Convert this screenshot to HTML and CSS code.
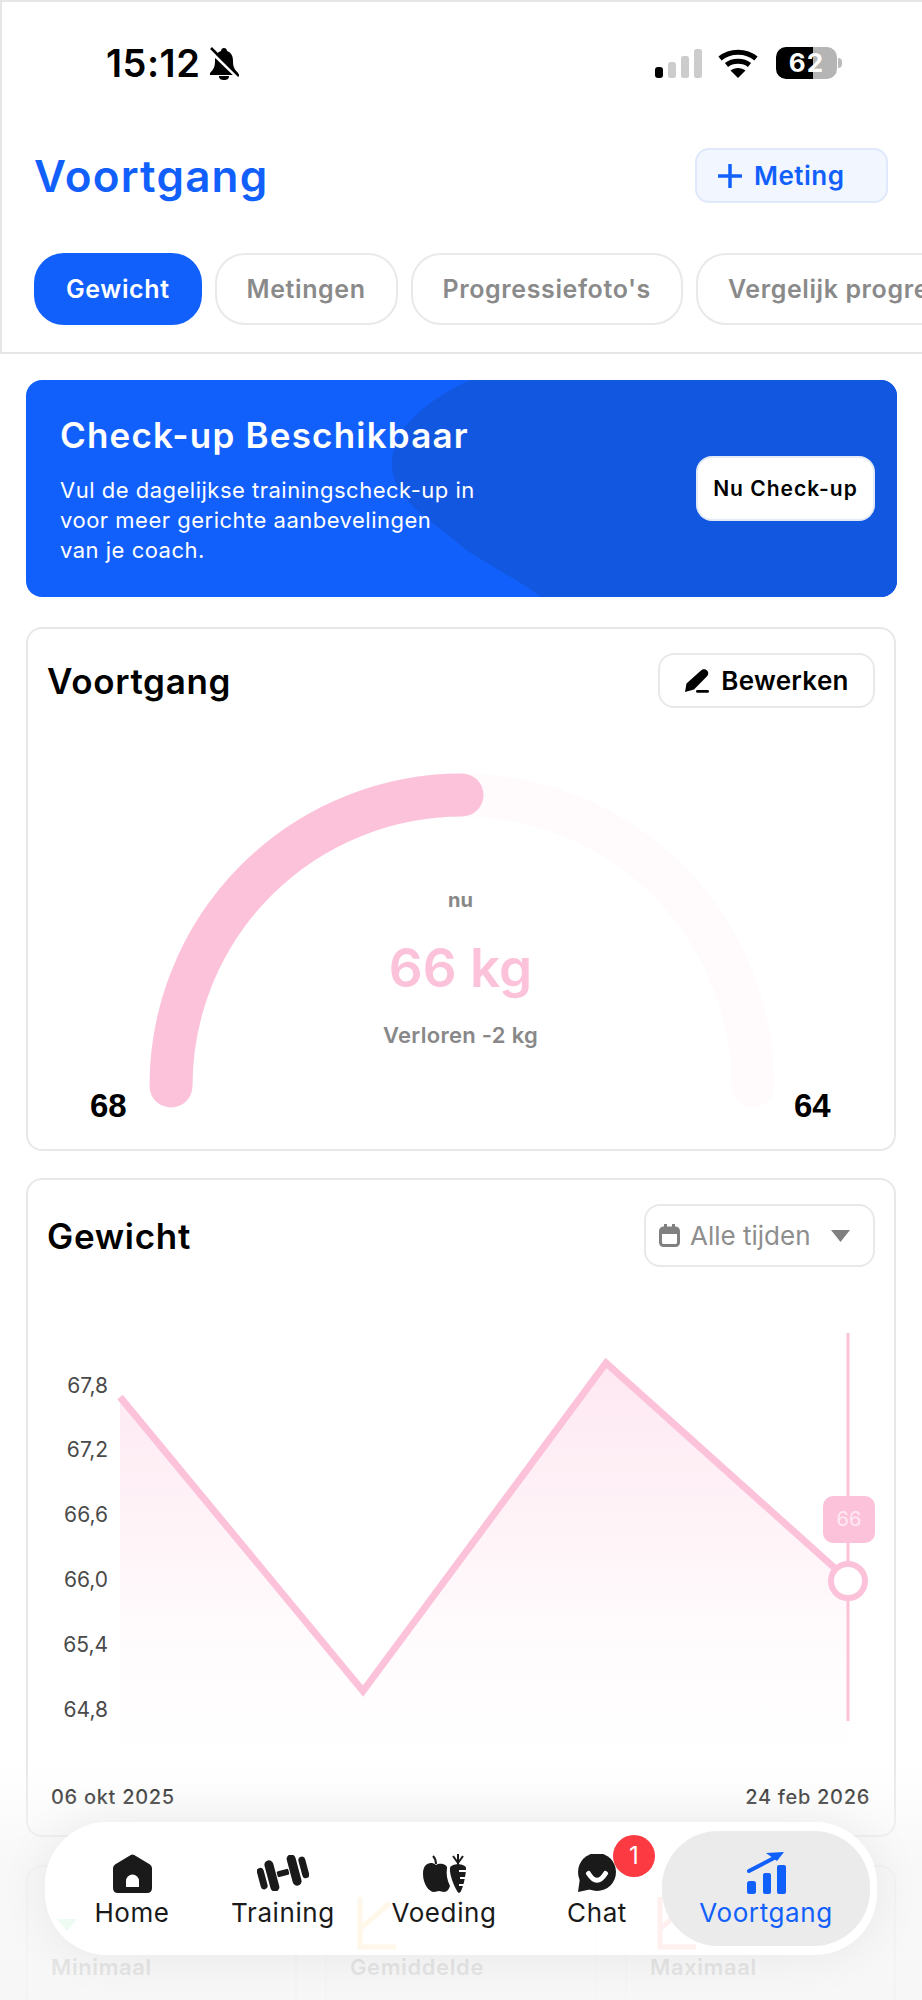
FILE: index.html
```html
<!DOCTYPE html>
<html lang="nl">

<head>
    <meta charset="UTF-8">
    <meta name="viewport" content="width=device-width, initial-scale=1.0">
    <title>Voortgang</title>
    <link rel="stylesheet" href="styles.css">
</head>

<body>
    <div class="page">
        <header class="header">
            <div class="status-bar">
                <span class="status-time">15:12</span>
                <svg class="status-bell" viewBox="0 0 30 33" width="30" height="33">
                    <path d="M15 1c-2 0-3 1.500-3 3C7 6 6 10 6 14c0 5-1 8-5 12v2h28v-2c-4-4-5-7-5-12 0-4-1-8-6-10 0-1.500-1-3-3-3z"></path>
                    <path d="M10 29h10c0 3-2 4-5 4s-5-1-5-4z"></path>
                    <path class="bell-gap" d="M1 4l28 27"></path>
                    <path class="bell-line" d="M2 1l28 28"></path>
                </svg>
                <div class="status-right">
                    <svg class="status-signal" viewBox="0 0 47 29" width="47" height="29">
                        <rect x="0" y="18" width="8" height="11" rx="3"></rect>
                        <rect class="signal-off" x="13" y="13" width="8" height="16" rx="2.500"></rect>
                        <rect class="signal-off" x="26" y="7" width="8" height="22" rx="2.500"></rect>
                        <rect class="signal-off" x="39" y="0" width="8" height="29" rx="2.500"></rect>
                    </svg>
                    <svg class="status-wifi" viewBox="0 0 40 29" width="40" height="29">
                        <path d="M2 9.500C12 1 28 1 38 9.500M8.500 16C14.500 11 25.500 11 31.500 16" fill="none" stroke="#000" stroke-width="5"></path>
                        <path d="M20 29l-7.500-7.500c4-3.500 11-3.500 15 0z"></path>
                    </svg>
                    <div class="battery">62</div>
                    <span class="battery-tip"></span>
                </div>
            </div>

            <div class="title-row">
                <h1 class="page-title">Voortgang</h1>
                <button class="add-button">
                    <svg viewBox="0 0 24 24" width="24" height="24">
                        <path d="M12 1v22M1 12h22" fill="none" stroke="#1260fb" stroke-width="3.500" stroke-linecap="round"></path>
                    </svg>
                    Meting
                </button>
            </div>

            <div class="tabs">
                <div class="tab active">Gewicht</div>
                <div class="tab">Metingen</div>
                <div class="tab">Progressiefoto's</div>
                <div class="tab">Vergelijk progressie</div>
            </div>
        </header>

        <main class="content">
            <section class="banner">
                <svg class="banner-blob" viewBox="0 0 871 217" width="871" height="217">
                    <path d="M444 0C400 20 366 50 366 83c0 37 34 52 74 87 40 25 60 35 75 47h356V0z"></path>
                </svg>
                <div class="banner-text">
                    <h2 class="banner-title">Check-up Beschikbaar</h2>
                    <p class="banner-copy">Vul de dagelijkse trainingscheck-up in<br>voor meer gerichte aanbevelingen<br>van je coach.</p>
                </div>
                <button class="banner-button">Nu Check-up</button>
            </section>

            <section class="card card-progress">
                <div class="card-head">
                    <h2 class="card-title">Voortgang</h2>
                    <button class="edit-button">
                        <svg viewBox="0 0 25 24" width="25" height="24">
                            <path d="M17 1.500c2-2 4.500-1.500 6 0s1.800 3.500.3 5.500L10 20.500 1 23l1.500-8.500z"></path>
                            <rect x="12" y="21" width="13" height="2.800" rx="1.400"></rect>
                        </svg>
                        Bewerken
                    </button>
                </div>
                <div class="gauge">
                    <svg viewBox="0 0 827 405" width="827" height="405">
                        <path class="gauge-track" d="M124 365A291 291 0 0 1 706 365"></path>
                        <path class="gauge-value" d="M124 365A291 291 0 0 1 415 74"></path>
                    </svg>
                    <div class="gauge-center">
                        <div class="gauge-now">nu</div>
                        <div class="gauge-weight">66 kg</div>
                        <div class="gauge-lost">Verloren -2 kg</div>
                    </div>
                    <span class="gauge-end gauge-start-label">68</span>
                    <span class="gauge-end gauge-goal-label">64</span>
                </div>
            </section>

            <section class="card card-chart">
                <div class="card-head">
                    <h2 class="card-title">Gewicht</h2>
                    <div class="range-select">
                        <svg viewBox="0 0 21 23" width="21" height="23">
                            <rect x="1.500" y="4" width="18" height="17.500" rx="3" fill="none" stroke="#808080" stroke-width="3"></rect>
                            <path d="M2 4h17v6H2zM5 0h3v5H5zM13 0h3v5h-3z" fill="#808080"></path>
                        </svg>
                        <span>Alle tijden</span>
                        <svg class="range-arrow" viewBox="0 0 19 12" width="19" height="12">
                            <path d="M0 0h19l-9.500 12z" fill="#808080"></path>
                        </svg>
                    </div>
                </div>
                <svg class="chart" viewBox="0 0 827 450" width="827" height="450">
                    <defs>
                        <linearGradient id="areaFill" x1="0" y1="0" x2="0" y2="1">
                            <stop offset="0" stop-color="#fcc2da" stop-opacity="0.38"></stop>
                            <stop offset="0.7" stop-color="#fcc2da" stop-opacity="0.06"></stop>
                            <stop offset="1" stop-color="#fcc2da" stop-opacity="0"></stop>
                        </linearGradient>
                    </defs>
                    <text class="axis-label" x="61" y="73">67,8</text>
                    <text class="axis-label" x="61" y="137">67,2</text>
                    <text class="axis-label" x="61" y="202">66,6</text>
                    <text class="axis-label" x="61" y="267">66,0</text>
                    <text class="axis-label" x="61" y="332">65,4</text>
                    <text class="axis-label" x="61" y="397">64,8</text>
                    <path d="M73 77L316 371 559 43 801 260V440H73z" fill="url(#areaFill)"></path>
                    <path class="chart-cursor" d="M801 13V401"></path>
                    <path class="chart-line" d="M73 77L316 371 559 43 801 260"></path>
                    <rect class="chart-tip" x="776" y="176" width="52" height="47" rx="10"></rect>
                    <text class="chart-tip-text" x="802" y="206">66</text>
                    <circle class="chart-dot" cx="801" cy="261" r="17"></circle>
                </svg>
                <div class="chart-dates">
                    <span>06 okt 2025</span>
                    <span>24 feb 2026</span>
                </div>
            </section>

            <section class="card card-stats">
                <div class="stat">
                    <svg class="stat-icon" viewBox="0 0 55 55" width="55" height="55">
                        <path d="M6 24l10 12 10-12z" fill="#4fd07f"></path>
                    </svg>
                    <div class="stat-label">Minimaal</div>
                    <div class="stat-value">65 kg</div>
                </div>
                <div class="stat">
                    <svg class="stat-icon" viewBox="0 0 55 55" width="55" height="55">
                        <path d="M10 2V52H46M10 34L40 8" fill="none" stroke="#ffb020" stroke-width="5"></path>
                    </svg>
                    <div class="stat-label">Gemiddelde</div>
                    <div class="stat-value">66,67 kg</div>
                </div>
                <div class="stat">
                    <svg class="stat-icon" viewBox="0 0 55 55" width="55" height="55">
                        <path d="M10 2V52H46M10 34L40 8" fill="none" stroke="#ff5a5a" stroke-width="5"></path>
                    </svg>
                    <div class="stat-label">Maximaal</div>
                    <div class="stat-value">68 kg</div>
                </div>
            </section>
        </main>

        <div class="bottom-fade"></div>

        <nav class="nav">
            <div class="nav-item">
                <span class="nav-icon">
                    <svg viewBox="0 0 39 39" width="39" height="39">
                        <path d="M17.800 1Q19.500-.2 21.200 1L37 10.500Q39 12 39 14.500V34Q39 39 34 39H5Q0 39 0 34V14.500Q0 12 2 10.500z"></path>
                        <path d="M13 33V27a6.500 6.500 0 0 1 13 0V33z" fill="#fff"></path>
                    </svg>
                </span>
                <span>Home</span>
            </div>
            <div class="nav-item">
                <span class="nav-icon">
                    <svg viewBox="-26 -18 52 36" width="52" height="36">
                        <g transform="rotate(-15)">
                            <rect x="-25" y="-11" width="7" height="22" rx="3.500"></rect>
                            <rect x="-16" y="-16" width="9" height="32" rx="4.500"></rect>
                            <rect x="-6" y="-3" width="12" height="6" rx="1.500"></rect>
                            <rect x="7" y="-16" width="9" height="32" rx="4.500"></rect>
                            <rect x="18" y="-11" width="7" height="22" rx="3.500"></rect>
                        </g>
                    </svg>
                </span>
                <span>Training</span>
            </div>
            <div class="nav-item">
                <span class="nav-icon">
                    <svg viewBox="0 0 43 39" width="43" height="39">
                        <path d="M13 11C8 7 0 9 0 20c0 10 6 18 11 18 2 0 3-1 5-1 2 0 3 1 5 1 3 0 5-3 6-6-3-6-4-12-3-18 1-3-7-6-11-3z"></path>
                        <path d="M13 10C13 6 12 4 10 2" fill="none" stroke="#1a1a1a" stroke-width="2"></path>
                        <path d="M27 14c1-5 15-5 16 0 0 8-4 25-7 25-2 0-10-17-9-25z"></path>
                        <path d="M35 11V0M35 9L30 2M35 9L40 2" fill="none" stroke="#1a1a1a" stroke-width="2"></path>
                        <path d="M36 17h8M37 24h6M36 31h5" fill="none" stroke="#fff" stroke-width="2"></path>
                    </svg>
                </span>
                <span>Voeding</span>
            </div>
            <div class="nav-item">
                <span class="nav-icon chat-icon">
                    <svg viewBox="0 0 38 38" width="38" height="38">
                        <circle cx="19" cy="18" r="19"></circle>
                        <path d="M2 24L0 38 14 35z"></path>
                        <path d="M10.500 19.500Q19 33 27.500 19.500" fill="none" stroke="#fff" stroke-width="5" stroke-linecap="round"></path>
                    </svg>
                    <span class="nav-badge">1</span>
                </span>
                <span>Chat</span>
            </div>
            <div class="nav-item active">
                <span class="nav-icon">
                    <svg viewBox="0 0 40 42" width="40" height="42">
                        <rect x="1" y="29" width="9" height="13" rx="2.500"></rect>
                        <rect x="17" y="21" width="8" height="21" rx="2"></rect>
                        <rect x="31" y="13" width="9" height="29" rx="2"></rect>
                        <path d="M3 19L28 6" fill="none" stroke="#1260fb" stroke-width="4" stroke-linecap="round"></path>
                        <path d="M20 1L38 0 31 9z"></path>
                    </svg>
                </span>
                <span>Voortgang</span>
            </div>
        </nav>
    </div>
</body>

</html>
```

FILE: styles.css
```css
* {
    box-sizing: border-box;
}

body {
    margin: 0;
    font-family: Inter, 'Noto Sans', sans-serif;
    color: #000;
    background: #fff;
}

h1,
h2,
p {
    margin: 0;
}

button {
    font-family: inherit;
    cursor: pointer;
}

.page {
    position: relative;
    width: 922px;
    height: 2000px;
    overflow: hidden;
}

/* header */

.header {
    height: 354px;
    border: 2px solid #e6e6e6;
    border-right: 0;
    padding-top: 44px;
}

.status-bar {
    display: flex;
    align-items: center;
    height: 34px;
    padding-left: 104px;
    padding-right: 80px;
}

.status-time {
    font-size: 38px;
    font-weight: 600;
    letter-spacing: 0.5px;
}

.status-bell {
    margin-left: 9px;
}

.bell-gap {
    stroke: #fff;
    stroke-width: 3;
}

.bell-line {
    stroke: #000;
    stroke-width: 2.500;
}

.status-right {
    display: flex;
    align-items: center;
    margin-left: auto;
}

.signal-off {
    fill: #cccccc;
}

.status-wifi {
    margin-left: 16px;
}

.battery {
    width: 61px;
    height: 32px;
    margin-left: 18px;
    border-radius: 10px;
    background: linear-gradient(90deg, #000 60%, #b5b5b5 60%);
    color: #fff;
    font-size: 26px;
    font-weight: 700;
    letter-spacing: 1px;
    line-height: 32px;
    text-align: center;
}

.battery-tip {
    width: 4px;
    height: 10px;
    margin-left: 1px;
    border-radius: 0 4px 4px 0;
    background: #bbb;
}

.title-row {
    display: flex;
    align-items: center;
    justify-content: space-between;
    height: 55px;
    margin-top: 68px;
    padding: 0 34px 0 32px;
}

.page-title {
    font-size: 44px;
    font-weight: 600;
    letter-spacing: 1.2px;
    color: #1260fb;
}

.add-button {
    display: flex;
    align-items: center;
    gap: 12px;
    width: 193px;
    height: 55px;
    padding: 0 0 0 21px;
    border: 2px solid #e0e9fb;
    border-radius: 14px;
    background: #f2f6fe;
    color: #1260fb;
    font-size: 26px;
    font-weight: 600;
    letter-spacing: 0.5px;
}

.tabs {
    display: flex;
    gap: 13px;
    margin-top: 50px;
    padding-left: 32px;
    overflow: hidden;
}

.tab {
    flex: none;
    height: 72px;
    padding: 0 30px;
    border: 2px solid #e9e9e9;
    border-radius: 30px;
    color: #8a8a8a;
    font-size: 25px;
    font-weight: 600;
    letter-spacing: 0.6px;
    line-height: 68px;
}

.tab.active {
    border-color: #1260fb;
    background: #1260fb;
    color: #fff;
}

/* content */

.content {
    display: flex;
    flex-direction: column;
    padding: 26px 26px 0 26px;
}

.banner {
    position: relative;
    display: flex;
    align-items: center;
    justify-content: space-between;
    width: 871px;
    height: 217px;
    padding: 0 22px 0 34px;
    border-radius: 16px;
    background: #1260fb;
    overflow: hidden;
}

.banner-blob {
    position: absolute;
    top: 0;
    left: 0;
    fill: #1257e0;
}

.banner-text {
    position: relative;
    padding-top: 3px;
    color: #fff;
}

.banner-title {
    font-size: 35px;
    font-weight: 600;
    letter-spacing: 1.2px;
    line-height: 40px;
}

.banner-copy {
    margin-top: 20px;
    font-size: 22px;
    letter-spacing: 0.5px;
    line-height: 30px;
}

.banner-button {
    position: relative;
    width: 179px;
    height: 65px;
    border: 2px solid #e3e9f5;
    border-radius: 16px;
    background: #fff;
    color: #000;
    font-size: 21px;
    font-weight: 600;
    letter-spacing: 1px;
}

.card {
    width: 870px;
    border: 2px solid #e8e8e8;
    border-radius: 16px;
    background: #fff;
    padding: 24px 19px;
}

.card-progress {
    height: 524px;
    margin-top: 30px;
}

.card-chart {
    height: 659px;
    margin-top: 27px;
}

.card-stats {
    display: grid;
    grid-template-columns: 269px 272px 269px;
    gap: 28px;
    height: 240px;
    margin-top: 28px;
    padding: 0;
}

.card-head {
    display: flex;
    align-items: center;
    justify-content: space-between;
}

.card-title {
    font-size: 35px;
    font-weight: 600;
    letter-spacing: 0.7px;
}

.edit-button {
    display: flex;
    align-items: center;
    justify-content: center;
    gap: 12px;
    width: 217px;
    height: 55px;
    border: 2px solid #e9e9e9;
    border-radius: 16px;
    background: #fff;
    color: #000;
    font-size: 26px;
    font-weight: 600;
    letter-spacing: 0.3px;
}

/* gauge */

.gauge {
    position: relative;
    width: 827px;
    height: 405px;
    margin-top: 13px;
}

.gauge-track,
.gauge-value {
    fill: none;
    stroke-width: 43;
    stroke-linecap: round;
}

.gauge-track {
    stroke: #fffbfc;
}

.gauge-value {
    stroke: #fcc2da;
}

.gauge-center {
    position: absolute;
    top: 164px;
    left: 0;
    right: 0;
    text-align: center;
}

.gauge-now {
    color: #888;
    font-size: 20px;
    font-weight: 700;
    line-height: 30px;
}

.gauge-weight {
    margin-top: 17px;
    color: #fcc2da;
    font-size: 53px;
    font-weight: 600;
    line-height: 72px;
}

.gauge-lost {
    margin-top: 16px;
    color: #888;
    font-size: 22px;
    font-weight: 600;
    letter-spacing: 0.3px;
    line-height: 30px;
}

.gauge-end {
    position: absolute;
    top: 368px;
    font-family: 'Liberation Sans', sans-serif;
    font-size: 33px;
    font-weight: 700;
    line-height: 34px;
}

.gauge-start-label {
    left: 43px;
}

.gauge-goal-label {
    left: 747px;
}

/* chart */

.range-select {
    display: flex;
    align-items: center;
    width: 231px;
    height: 63px;
    padding-left: 13px;
    border: 2px solid #e9e9e9;
    border-radius: 16px;
    color: #8e8e8e;
    font-size: 26px;
}

.range-select span {
    margin-left: 10px;
}

.range-arrow {
    margin-left: 20px;
}

.chart {
    display: block;
    margin-top: 53px;
    overflow: visible;
}

.axis-label {
    fill: #4a4a4a;
    font-size: 21px;
    text-anchor: end;
}

.chart-cursor {
    fill: none;
    stroke: #fcc2da;
    stroke-width: 3;
}

.chart-line {
    fill: none;
    stroke: #fcc2da;
    stroke-width: 7;
}

.chart-tip {
    fill: #fcc2da;
}

.chart-tip-text {
    fill: #ffe9f2;
    font-size: 20px;
    text-anchor: middle;
}

.chart-dot {
    fill: #fff;
    stroke: #fcc2da;
    stroke-width: 6;
}

.chart-dates {
    display: flex;
    justify-content: space-between;
    margin-top: 12px;
    padding: 0 5px 0 4px;
    color: #111;
    font-size: 20px;
    font-weight: 500;
    letter-spacing: 0.7px;
    line-height: 30px;
}

/* stats, mostly hidden under the nav */

.stat {
    padding: 28px 0 0 23px;
    border-left: 2px solid #eeeeee;
    border-right: 2px solid #eeeeee;
}

.stat:first-child {
    border-left: 0;
}

.stat:last-child {
    border-right: 0;
}

.stat-icon {
    position: relative;
    z-index: 1;
    display: block;
}

.stat-label {
    margin-top: 2px;
    color: #888;
    font-size: 22px;
    font-weight: 600;
    letter-spacing: 0.6px;
    line-height: 30px;
}

.stat-value {
    margin-top: 12px;
    font-size: 27px;
    font-weight: 600;
}

.bottom-fade {
    position: absolute;
    left: 0;
    right: 0;
    bottom: 0;
    height: 240px;
    background: linear-gradient(180deg, rgba(246, 246, 246, 0), rgba(246, 246, 246, 0.8) 45%, rgba(246, 246, 246, 0.85));
}

/* bottom nav */

.nav {
    position: absolute;
    top: 1822px;
    left: 45px;
    z-index: 2;
    display: grid;
    grid-template-columns: 156px 146px 176px 130px 208px;
    width: 832px;
    height: 133px;
    padding: 9px 7px 9px 9px;
    border-radius: 62px;
    background: rgba(255, 255, 255, 0.9);
    box-shadow: 0 0 50px rgba(0, 0, 0, 0.07);
}

.nav-item {
    display: flex;
    flex-direction: column;
    align-items: center;
    padding-top: 21px;
    border-radius: 56px;
    color: #1a1a1a;
    font-size: 26px;
    letter-spacing: 0.6px;
    line-height: 38px;
    fill: #1a1a1a;
}

.nav-item.active {
    background: #ebebeb;
    color: #1260fb;
    fill: #1260fb;
}

.nav-icon {
    position: relative;
    display: flex;
    align-items: center;
    justify-content: center;
    height: 42px;
}

.nav-badge {
    position: absolute;
    top: -17px;
    left: 35px;
    width: 42px;
    height: 42px;
    border-radius: 50%;
    background: #fc3a42;
    color: #fff;
    font-size: 24px;
    letter-spacing: 0;
    line-height: 42px;
    text-align: center;
}
```
